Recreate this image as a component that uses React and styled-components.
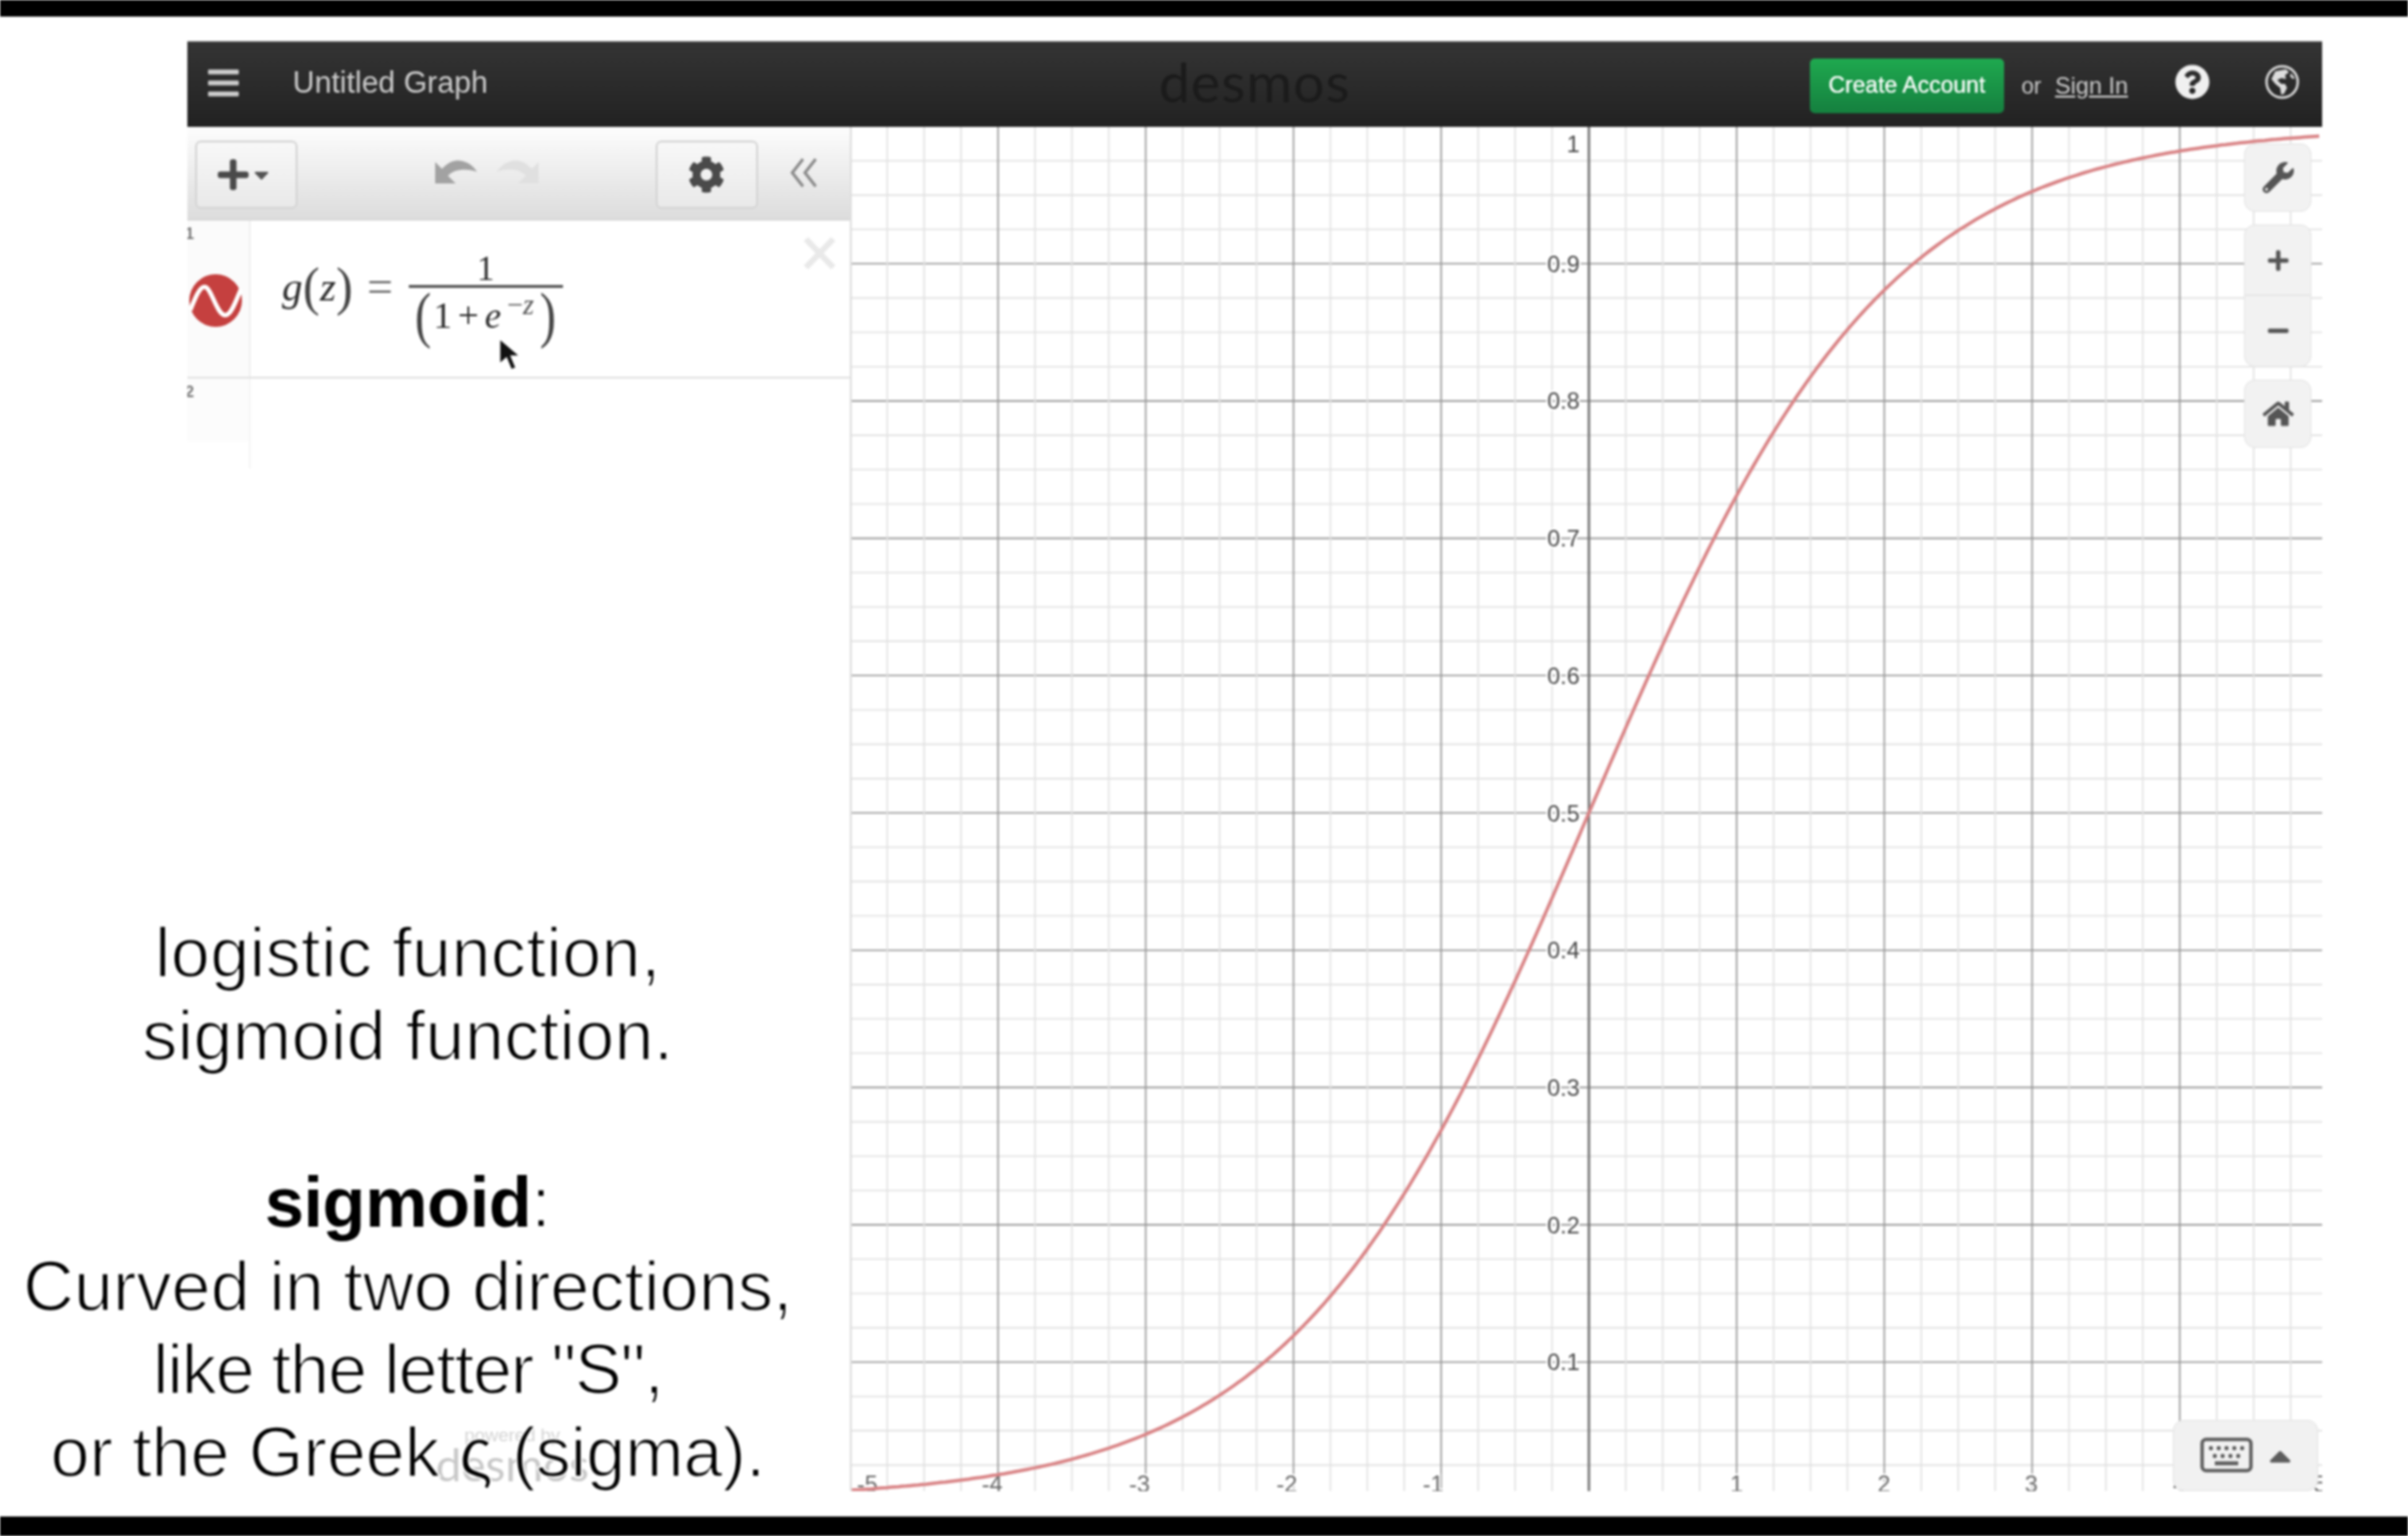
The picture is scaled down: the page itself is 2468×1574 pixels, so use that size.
import React from 'react';
import styled, { createGlobalStyle } from 'styled-components';
import { FaBars, FaPlus, FaMinus, FaCog, FaWrench, FaHome, FaQuestionCircle, FaCaretDown, FaCaretUp } from 'react-icons/fa';

const Global = createGlobalStyle`
  html, body { margin: 0; padding: 0; background: #fff; }
  body { font-family: "Liberation Sans", Arial, sans-serif; }
`;

const Page = styled.div`
  position: relative; width: 2468px; height: 1574px; display: flex; flex-direction: column;
  background: #fff; overflow: hidden; filter: blur(0.8px);
`;
const Letterbox = styled.div`height: ${p => p.$h}px; flex: none; background: #000;`;
const Stage = styled.div`flex: 1; min-height: 0; padding: 25px 88px 26px 192px; display: flex;`;
const Shell = styled.div`flex: 1; display: flex; flex-direction: column; min-width: 0;`;

const Header = styled.header`
  height: 88px; flex: none; display: flex; align-items: center; color: #ccc;
  background: linear-gradient(#343434, #222); border-top: 1px solid #888; box-sizing: border-box;
`;
const HeaderSide = styled.div`flex: 1; display: flex; align-items: center; justify-content: ${p => p.$end ? 'flex-end' : 'flex-start'};`;
const Menu = styled(FaBars)`width: 36px; height: 36px; margin: -3px 0 0 19px; color: #ccc;`;
const Title = styled.div`margin: -3px 0 0 53px; font-size: 31px; color: #ccc;`;
const Logo = styled.div`font-family: Lato, sans-serif; font-size: 57px; font-weight: 400; color: #1b1b1b; line-height: 1; letter-spacing: 1px; margin-top: -6px;`;
const Create = styled.button`
  width: 199px; height: 56px; border: 0; border-radius: 5px; padding: 0; margin-right: 18px; margin-top: 2px;
  background: linear-gradient(#1fa94f, #15803f); color: #fff; font: 23.5px "Liberation Sans", sans-serif; text-shadow: 0 0 .6px #fff;
`;
const Or = styled.span`font-size: 23px; color: #ccc; margin-right: 14px; margin-top: 3px;`;
const SignIn = styled.a`font-size: 24px; color: #ccc; text-decoration: underline; margin-top: 3px; margin-right: 48px;`;
const Help = styled(FaQuestionCircle)`width: 36px; height: 36px; color: #f0f0f0; margin: -5px 56px 0 0;`;
const GlobeIcon = styled.svg`width: 36px; height: 36px; margin: -5px 23px 0 0; color: #ddd;`;

const Body = styled.div`flex: 1; display: flex; min-height: 0;`;
const Panel = styled.aside`width: 679px; flex: none; position: relative; display: flex; flex-direction: column; background: #fff;`;
const Toolbar = styled.div`
  height: 96px; flex: none; box-sizing: border-box; display: flex; align-items: center; padding: 2px 0 0 8px;
  background: linear-gradient(#fdfdfd, #dcdcdc); border-bottom: 1px solid #d2d2d2;
`;
const ToolBtn = styled.div`
  width: 105px; height: 70px; box-sizing: border-box; border: 2px solid #d4d4d4; border-radius: 6px; display: flex; align-items: center; justify-content: center; gap: 1px;
  background: linear-gradient(#f8f8f8, #e9e9e9); color: #4a4a4a;
`;
const UndoGroup = styled.div`margin-left: 141px; width: 105px; display: flex; gap: 20px;`;
const UndoIcon = styled.svg`width: 43px; height: 27px; margin-top: -8px; flex: none; color: ${p => p.$flip ? '#e0e0e0' : '#a2a2a2'}; transform: ${p => p.$flip ? 'scaleX(-1)' : 'none'};`;
const Gear = styled(FaCog)`width: 38px; height: 38px; margin-left: -2px;`;
const PlusIco = styled(FaPlus)`width: 36px; height: 36px; margin-left: -6px;`;
const Caret = styled(FaCaretDown)`width: 20px; height: 24px; color: #555;`;
const GearBtn = styled(ToolBtn)`margin-left: 121px;`;
const Chevrons = styled.svg`width: 28px; height: 32px; margin: -4px 0 0 33px; color: #8a8a8a;`;

const Row = styled.div`height: ${p => p.$h}px; flex: none; display: flex; box-sizing: border-box; border-bottom: ${p => p.$line ? '2px solid #e2e2e2' : '0'};`;
const Gutter = styled.div`
  width: 65px; flex: none; box-sizing: border-box; background: #fbfbfb; border-right: 2px solid #f1f1f1; overflow: hidden;
  display: flex; flex-direction: column;
`;
const LineNo = styled.div`font-size: 16px; line-height: 20px; color: #777; margin: 4px 0 0 -2px; font-weight: 700;`;
const Badge = styled.svg`width: 54px; height: 54px; margin: 31px 0 0 2px; flex: none;`;
const Expression = styled.div`position: relative; flex: 1; display: flex; padding: 33px 0 0 32px; align-items: flex-start; justify-content: space-between;`;
const MathLine = styled.div`display: flex; align-items: center; font-family: "Liberation Serif", serif; font-size: 38px; color: #2c2c2c; line-height: 1;`;
const Var = styled.i`font-style: italic;`;
const Paren = styled.span`font-size: ${p => p.$s || 54}px; font-weight: 400; line-height: 1; color: #444; display: inline-block; transform: ${p => p.$s ? 'scaleX(.78)' : 'scaleX(.95)'};`;
const Lhs = styled.div`display: flex; align-items: center; margin-top: -22px; font-size: 42px;`;
const Eq = styled.span`margin: 0 16px 0 14px; color: #666; font-size: 47px;`;
const Frac = styled.div`display: flex; flex-direction: column; width: 158px; align-items: center;`;
const Num = styled.div`height: 33px; line-height: 33px; font-size: 36px;`;
const Rule = styled.div`width: 100%; height: 3px; background: #555;`;
const Den = styled.div`height: 54px; display: flex; align-items: center; margin-top: 1px;`;
const Plus = styled.span`margin: 0 6px; font-size: 38px;`;
const Sup = styled.sup`font-size: 29px; line-height: 1; margin: -22px 4px 0 6px; color: #555; align-self: center;`;
const Close = styled.svg`width: 34px; height: 33px; color: #e9e9e9; margin: -16px 14px 0 0;`;
const CursorArrow = styled.svg`position: absolute; left: 253px; top: 119px; width: 26px; height: 40px;`;
const FadeGutter = styled.div`
  width: 65px; height: 92px; box-sizing: border-box; border-right: 2px solid #f5f5f5; overflow: hidden;
  background: linear-gradient(#fcfcfc 68%, #fff 72%);
`;
const Watermark = styled.div`position: absolute; left: 253px; bottom: 4px; width: 160px; text-align: center; color: #c8c8c8; line-height: 1;`;
const Powered = styled.div`font-size: 19px; color: #d4d4d4; margin-bottom: 2px;`;
const WmLogo = styled.div`font-family: Lato, sans-serif; font-size: 47px; margin-top: -5px;`;

const Canvas = styled.main`position: relative; flex: 1; min-width: 0; border-left: 2px solid #dedede; background: #fff;`;
const Chart = styled.svg`display: block; width: 100%; height: 100%;`;
const AxisLabel = styled.text`font: 24px "Liberation Sans", sans-serif; fill: #484848; stroke: #fff; stroke-width: 4px; paint-order: stroke; dominant-baseline: central;`;
const Tools = styled.div`position: absolute; top: 17px; right: 11px; display: flex; flex-direction: column; gap: 13px;`;
const ToolCard = styled.div`width: 69px; box-sizing: border-box; background: #f2f2f2; border: 1px solid #e4e4e4; border-radius: 11px; display: flex; flex-direction: column; color: #555;`;
const ToolCell = styled.div`height: ${p => p.$h}px; display: flex; align-items: center; justify-content: center; border-top: ${p => p.$sep ? '1px solid #ddd' : '0'};`;
const KeyPad = styled.div`position: absolute; right: 4px; bottom: 0; width: 149px; height: 73px; box-sizing: border-box; border: 1px solid #e4e4e4; border-radius: 11px; background: #f1f1f1; display: flex; align-items: center; padding-left: 27px; gap: 13px; color: #5c5c5c;`;
const KeyIcon = styled.svg`width: 54px; height: 36px; margin-top: -1px;`;
const Up = styled(FaCaretUp)`width: 30px; height: 36px; color: #5c5c5c;`;

const Caption = styled.div`
  position: absolute; left: 1px; top: 934px; width: 834px; text-align: center; color: #000;
  font: 72px/85.4px "Liberation Sans", sans-serif; -webkit-text-stroke: 1.6px #fff;
`;
const CapLine = styled.div`height: 85.4px; white-space: nowrap; letter-spacing: ${p => p.$ls || 0}px;`;
const Strong = styled.b`-webkit-text-stroke: 0; color: #000; font-weight: 700; letter-spacing: -0.4px;`;

const X0 = 1628.5, UX = 151.4, Y0 = 1536.5, UY = 1407;
const curve = (() => {
  let d = '';
  for (let px = 873; px <= 2380; px += 4) {
    const z = (px - X0) / UX;
    d += `${d ? 'L' : 'M'}${px} ${(Y0 - UY / (1 + Math.exp(-z))).toFixed(1)}`;
  }
  return d;
})();

function Graph() {
  const vs = [], hs = [];
  for (let k = -20; k <= 20; k++) vs.push({ x: X0 + k * UX / 4, k });
  for (let k = -20; k <= 20; k++) hs.push({ y: 833 + k * UY / 40, k });
  const stroke = k => (k === 0 ? '#6e6e6e' : k % 4 === 0 ? '#999' : '#e2e2e2');
  const width = k => (k === 0 ? 2.4 : 1.6);
  const yLabels = ['0.1', '0.2', '0.3', '0.4', '0.5', '0.6', '0.7', '0.8', '0.9'];
  return (
    <Chart viewBox="873 130 1507 1398" preserveAspectRatio="none">
      {hs.filter(l => l.y > 130 && l.y < 1528).map(l => <line key={l.k} x1="873" x2="2380" y1={l.y} y2={l.y} stroke={l.k === 0 ? '#999' : stroke(l.k)} strokeWidth={width(l.k === 0 ? 4 : l.k)} />)}
      {vs.filter(l => l.x > 873 && l.x < 2380).map(l => <line key={l.k} y1="130" y2="1528" x1={l.x} x2={l.x} stroke={stroke(l.k)} strokeWidth={width(l.k)} />)}
      {yLabels.map(t => <AxisLabel key={t} x="1619" y={Y0 - UY * Number(t)} textAnchor="end">{t}</AxisLabel>)}
      <AxisLabel x="1619" y="147" textAnchor="end">1</AxisLabel>
      {[[-5, 889], [-4, 1017], [-3, 1168], [-2, 1319], [-1, 1469], [1, 1780], [2, 1931], [3, 2082], [4, 2234], [5, 2378]].map(([n, x]) => (
        <AxisLabel key={n} x={x} y="1520" textAnchor="middle" style={{ fill: '#666' }}>{n}</AxisLabel>
      ))}
      <path d={curve} fill="none" stroke="#d98486" strokeWidth="3.5" />
    </Chart>
  );
}

const UndoPath = props => (
  <UndoIcon viewBox="0 0 43 27" {...props}>
    <path d="M0 5 L0 27 L21 27 L13 19 C20 12 30 11 43 15 C36 4 20 -3 7 12 Z" fill="currentColor" />
  </UndoIcon>
);

export default function App() {
  return (
    <Page>
      <Global />
      <Letterbox $h={17} />
      <Stage>
        <Shell>
          <Header>
            <HeaderSide>
              <Menu />
              <Title>Untitled Graph</Title>
            </HeaderSide>
            <Logo>desmos</Logo>
            <HeaderSide $end>
              <Create>Create Account</Create>
              <Or>or</Or>
              <SignIn>Sign In</SignIn>
              <Help />
              <GlobeIcon viewBox="0 0 36 36">
                <circle cx="18" cy="18" r="16" fill="none" stroke="currentColor" strokeWidth="2.5" />
                <path d="M11 7 L22 5 L25 8 L21 11 L22 15 L17 14 L13 16 L17 20 L21 20 L23 24 L20 30 L17 31 L16 24 L11 20 L7 15 Z" fill="currentColor" />
                <path d="M27 9 L31 14 L29 15 L26 12 Z" fill="currentColor" />
              </GlobeIcon>
            </HeaderSide>
          </Header>
          <Body>
            <Panel>
              <Toolbar>
                <ToolBtn><PlusIco /><Caret /></ToolBtn>
                <UndoGroup><UndoPath /><UndoPath $flip /></UndoGroup>
                <GearBtn><Gear /></GearBtn>
                <Chevrons viewBox="0 0 28 32">
                  <path d="M13 2 L2 16 L13 30 M26 2 L15 16 L26 30" fill="none" stroke="currentColor" strokeWidth="3" />
                </Chevrons>
              </Toolbar>
              <Row $h={162} $line>
                <Gutter>
                  <LineNo>1</LineNo>
                  <Badge viewBox="0 0 54 54">
                    <circle cx="27" cy="27" r="27" fill="#c5403f" />
                    <path d="M1 37 C6 24 11 12 16 13 C23 14 28 42 37 42 C43 42 48 27 53 15" fill="none" stroke="#fff" strokeWidth="4.5" />
                  </Badge>
                </Gutter>
                <Expression>
                  <MathLine>
                    <Lhs>
                      <Var>g</Var><Paren>(</Paren><Var>z</Var><Paren>)</Paren>
                      <Eq>=</Eq>
                    </Lhs>
                    <Frac>
                      <Num>1</Num>
                      <Rule />
                      <Den>
                        <Paren $s={64}>(</Paren>
                        <span>1</span><Plus>+</Plus><Var>e</Var>
                        <Sup>−<Var>z</Var></Sup>
                        <Paren $s={64}>)</Paren>
                      </Den>
                    </Frac>
                  </MathLine>
                  <Close viewBox="0 0 34 33">
                    <path d="M3 2 L31 31 M31 2 L3 31" fill="none" stroke="currentColor" strokeWidth="6" />
                  </Close>
                  <CursorArrow viewBox="0 0 26 40">
                    <path d="M2 2 L2 28 L9 22 L14 34 L19 32 L14 20 L23 20 Z" fill="#111" stroke="#fff" strokeWidth="1.5" />
                  </CursorArrow>
                </Expression>
              </Row>
              <FadeGutter><LineNo>2</LineNo></FadeGutter>
              <Watermark>
                <Powered>powered by</Powered>
                <WmLogo>desmos</WmLogo>
              </Watermark>
            </Panel>
            <Canvas>
              <Graph />
              <Tools>
                <ToolCard><ToolCell $h={68}><FaWrench size={32} /></ToolCell></ToolCard>
                <ToolCard>
                  <ToolCell $h={71}><FaPlus size={24} /></ToolCell>
                  <ToolCell $h={72} $sep><FaMinus size={24} /></ToolCell>
                </ToolCard>
                <ToolCard><ToolCell $h={68}><FaHome size={32} /></ToolCell></ToolCard>
              </Tools>
              <KeyPad>
                <KeyIcon viewBox="0 0 54 36">
                  <rect x="2" y="2" width="50" height="32" rx="4" fill="none" stroke="currentColor" strokeWidth="3.5" />
                  {[9, 17, 25, 33, 41].map(x => <circle key={x} cx={x + 2} cy="11" r="2.2" fill="currentColor" />)}
                  {[13, 21, 29, 37].map(x => <circle key={x} cx={x + 2} cy="19" r="2.2" fill="currentColor" />)}
                  <rect x="15" y="24.5" width="24" height="4" fill="currentColor" />
                </KeyIcon>
                <Up />
              </KeyPad>
            </Canvas>
          </Body>
        </Shell>
      </Stage>
      <Letterbox $h={20} />
      <Caption>
        <CapLine $ls={0.35}>logistic function,</CapLine>
        <CapLine $ls={0.25}>sigmoid function.</CapLine>
        <CapLine />
        <CapLine><Strong>sigmoid</Strong>:</CapLine>
        <CapLine>Curved in two directions,</CapLine>
        <CapLine $ls={-1.25}>like the letter "S",</CapLine>
        <CapLine $ls={-0.1}>or the Greek ς (sigma).</CapLine>
      </Caption>
    </Page>
  );
}
